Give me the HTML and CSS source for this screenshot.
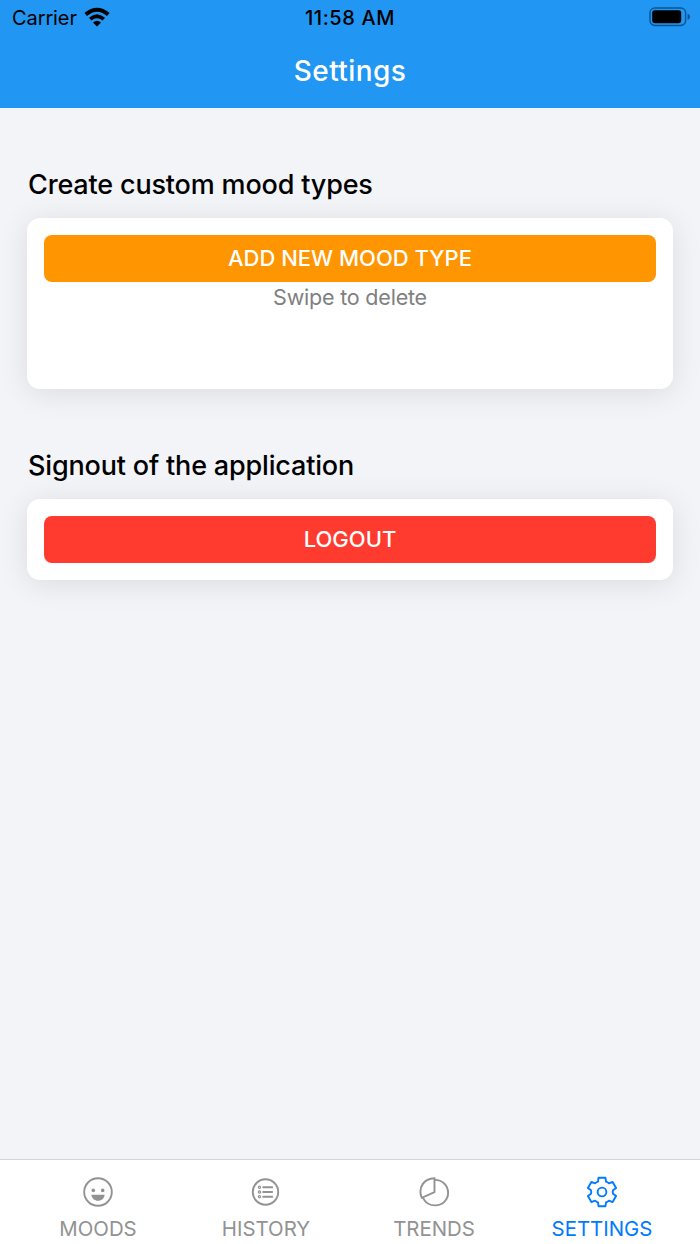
FILE: index.html
```html
<!DOCTYPE html>
<html lang="en">
<head>
  <meta charset="UTF-8">
  <meta name="viewport" content="width=device-width, initial-scale=1.0">
  <title>Settings</title>
  <link rel="stylesheet" href="styles.css">
</head>
<body>
  <header class="header">
    <div class="status-bar">
      <div class="status-left">
        <span class="carrier">Carrier</span>
        <svg class="wifi" width="26" height="20" viewBox="0 0 26 20">
          <path d="M1.7 7.6Q13 -2 24.3 7.6" fill="none" stroke="#000" stroke-width="4"/>
          <path d="M6.2 12.2Q13 6.2 19.8 12.2" fill="none" stroke="#000" stroke-width="3.7"/>
          <path d="M9 15.4Q13 12.2 17 15.4L13 19.4Z"/>
        </svg>
      </div>
      <span class="time">11:58 AM</span>
      <div class="status-right">
        <svg width="42" height="20" viewBox="0 0 42 20">
          <rect x="1" y="1" width="35.6" height="17.4" rx="4.8" fill="none" stroke="#0d5490" stroke-width="1.5"/>
          <rect x="3.2" y="3.2" width="29" height="13" rx="2.4"/>
          <path d="M38.6 6.6Q41 7.5 41 9.8T38.6 13Z" fill="#0d5490"/>
        </svg>
      </div>
    </div>
    <h1 class="title">Settings</h1>
  </header>

  <main class="content">
    <section>
      <h2 class="heading">Create custom mood types</h2>
      <div class="card card-mood">
        <button class="btn btn-add">ADD NEW MOOD TYPE</button>
        <p class="hint">Swipe to delete</p>
      </div>
    </section>
    <section>
      <h2 class="heading">Signout of the application</h2>
      <div class="card">
        <button class="btn btn-logout">LOGOUT</button>
      </div>
    </section>
  </main>

  <nav class="tabs">
    <a class="tab">
      <svg class="icon" viewBox="-16 -16 32 32">
        <circle r="13.8"/>
        <circle class="solid" cx="-4.7" cy="-1.6" r="1.8"/>
        <circle class="solid" cx="4.7" cy="-1.6" r="1.8"/>
        <path class="solid" d="M-6.7 2.8H6.7C6.2 6.6 3.5 8.8 0 8.8S-6.2 6.6 -6.7 2.8Z"/>
      </svg>
      <span class="label">MOODS</span>
    </a>
    <a class="tab">
      <svg class="icon" viewBox="-15.5 -16 32 32">
        <circle r="12.7"/>
        <path d="M-2.3 -4.8H6.7M-2.3 0H6.7M-2.3 4.8H6.7" stroke-linecap="round"/>
        <g stroke-width="1.2">
          <circle cx="-6" cy="-4.8" r="1.1"/>
          <circle cx="-6" cy="0" r="1.1"/>
          <circle cx="-6" cy="4.8" r="1.1"/>
        </g>
      </svg>
      <span class="label">HISTORY</span>
    </a>
    <a class="tab">
      <svg class="icon" viewBox="-16 -16 32 32">
        <path d="M.5 -12.1C8.2 -12.4 14.1 -6.6 14.1 .8C14.1 8.2 8.3 13.4 1.2 13.4C-4.4 13.4 -8.7 10.5 -11 5.8"/>
        <path d="M.5 -13.7V.2L-12.2 5.8C-16.4 -4.1 -10.3 -13.6 .5 -13.7Z"/>
      </svg>
      <span class="label">TRENDS</span>
    </a>
    <a class="tab active">
      <svg class="icon" viewBox="-16 -16 32 32">
        <path stroke-linejoin="round" d="M-4 -10.3L-3.5 -14.2H3.5L4 -10.3Q5.5 -9.8 6.9 -8.6L10.6 -10.1L14.1 -4.1L11 -1.7Q10.4 0 11 1.7L14.1 4.1L10.6 10.1L6.9 8.6Q5.5 9.8 4 10.3L3.5 14.2H-3.5L-4 10.3Q-5.5 9.8 -6.9 8.6L-10.6 10.1L-14.1 4.1L-11 1.7Q-10.4 0 -11 -1.7L-14.1 -4.1L-10.6 -10.1L-6.9 -8.6Q-5.5 -9.8 -4 -10.3Z"/>
        <circle r="4.4"/>
      </svg>
      <span class="label">SETTINGS</span>
    </a>
  </nav>
</body>
</html>
```
FILE: styles.css
```css
* {
  box-sizing: border-box;
}
body {
  margin: 0;
  height: 100vh;
  display: flex;
  flex-direction: column;
  font-family: Inter, "Liberation Sans", sans-serif;
  background-color: #f3f4f8;
  color: #000;
}
.header {
  height: 108px;
  background-color: #2196f3;
}
.status-bar {
  display: grid;
  grid-template-columns: 1fr auto 1fr;
  align-items: center;
  height: 36px;
  padding: 0 9px 0 12px;
  font-size: 20px;
  line-height: 36px;
}
.status-left {
  display: flex;
  align-items: center;
  gap: 7px;
}
.carrier {
  letter-spacing: -0.1px;
}
.status-right {
  display: flex;
  justify-content: flex-end;
}
.status-right svg {
  margin-top: -2px;
}
.wifi {
  margin-top: -2px;
}
.time {
  padding-right: 3px;
  font-weight: 500;
  letter-spacing: 0.6px;
}
.title {
  margin: 16px 0 0;
  font-size: 28px;
  line-height: 39px;
  font-weight: 500;
  letter-spacing: 0.4px;
  text-align: center;
  color: #fff;
}
.content {
  flex: 1;
  display: flex;
  flex-direction: column;
  gap: 60px;
  padding: 60px 27px 0;
}
.heading {
  margin: 0 0 16px;
  padding-left: 1px;
  font-size: 27px;
  line-height: 34px;
  font-weight: 500;
  letter-spacing: -0.17px;
}
.card {
  padding: 17px;
  border-radius: 13px;
  background-color: #fff;
  box-shadow: 0 4px 30px rgba(0, 0, 0, 0.1);
}
.card-mood {
  height: 171px;
}
.btn {
  display: block;
  width: 100%;
  height: 47px;
  padding: 0 0 2px;
  border: none;
  border-radius: 8px;
  font-family: inherit;
  font-size: 22px;
  font-weight: 500;
  color: #fff;
}
.btn-add {
  background-color: #ff9500;
}
.btn-logout {
  background-color: #ff3b30;
}
.hint {
  margin: 0;
  font-size: 21.5px;
  line-height: 30px;
  letter-spacing: -0.2px;
  text-align: center;
  color: #808080;
}
.tabs {
  display: grid;
  grid-template-columns: repeat(4, 1fr);
  height: 85px;
  padding: 15.5px 14px 0;
  border-top: 1px solid #d3d4d7;
  background-color: #fff;
}
.tab {
  display: flex;
  flex-direction: column;
  align-items: center;
  color: #929292;
}
.tab.active {
  color: #007aff;
}
.icon {
  width: 32px;
  height: 32px;
  fill: none;
  stroke: currentColor;
  stroke-width: 1.9;
}
.icon .solid {
  fill: currentColor;
  stroke: none;
}
.label {
  margin-top: 5px;
  font-size: 20.4px;
  line-height: 31px;
}
```
